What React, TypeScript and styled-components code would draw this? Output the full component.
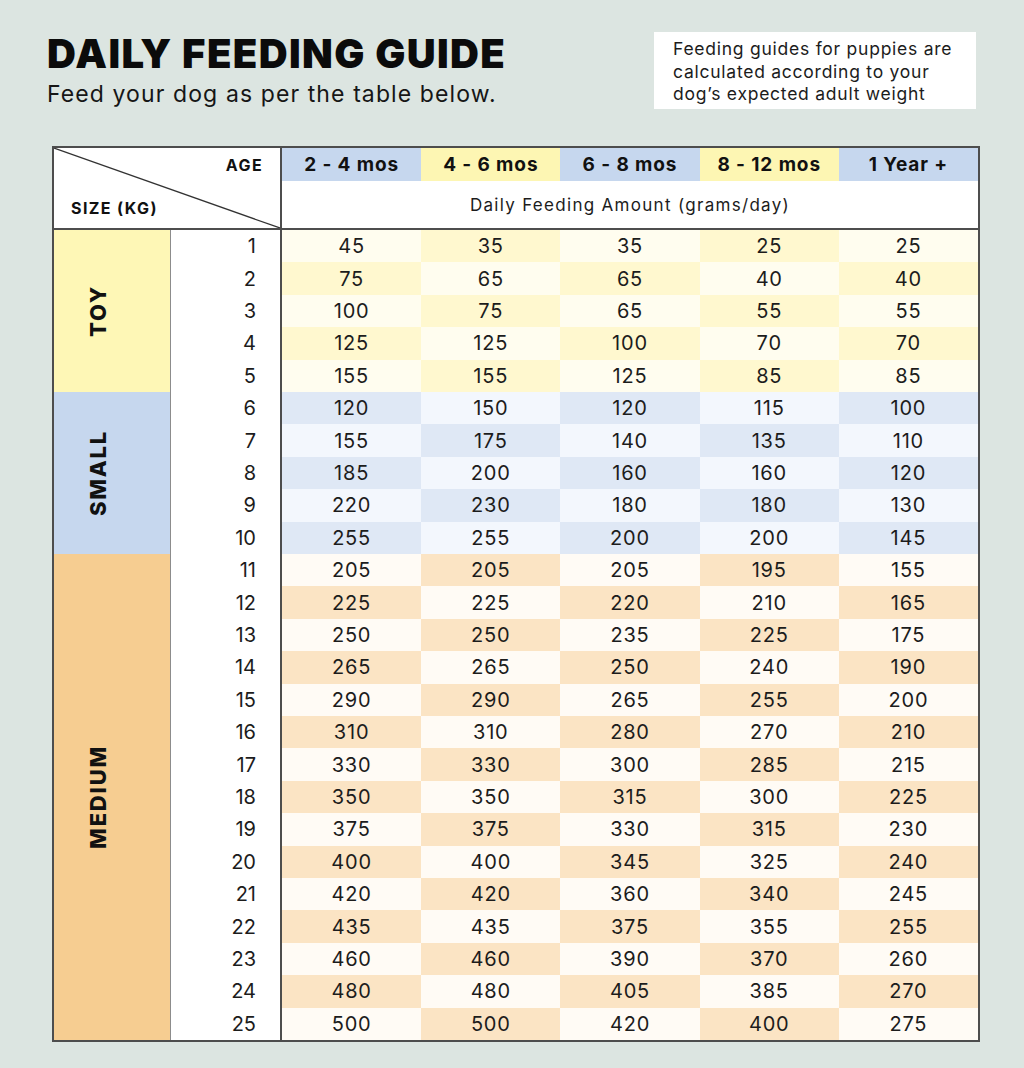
import React from "react";
import styled, { createGlobalStyle } from "styled-components";

const GlobalStyle = createGlobalStyle`
  html, body {
    margin: 0;
    padding: 0;
    background: #dce5e1;
  }
  body {
    font-family: Inter, "Liberation Sans", sans-serif;
    color: #1a1a1a;
  }
`;

type Tone = "toy" | "small" | "medium";

const palette: Record<Tone, { label: string; light: string; dark: string }> = {
  toy: { label: "#fef7b6", light: "#fffdef", dark: "#fff8cf" },
  small: { label: "#c6d7ee", light: "#f3f7fd", dark: "#dfe8f5" },
  medium: { label: "#f6cd91", light: "#fffbf5", dark: "#fbe4c4" },
};

const Page = styled.div`
  width: 1024px;
  height: 1068px;
  box-sizing: border-box;
  padding: 32px 48px 0 47px;
  background: #dce5e1;
`;

const Top = styled.div`
  display: flex;
  justify-content: space-between;
  align-items: flex-start;
`;

const Titles = styled.div`
  padding-top: 2px;
`;

const Title = styled.h1`
  margin: 0;
  font-size: 40px;
  line-height: 40px;
  font-weight: 900;
  color: #0b0b0b;
  letter-spacing: 1.4px;
`;

const Subtitle = styled.p`
  margin: 7px 0 0;
  font-size: 23px;
  line-height: 26px;
  font-weight: 400;
  color: #161616;
  letter-spacing: 1.1px;
`;

const Note = styled.div`
  width: 322px;
  height: 77px;
  box-sizing: border-box;
  padding: 6px 19px;
  background: #ffffff;
  font-size: 17.5px;
  line-height: 22.5px;
  color: #1c1c1c;
  letter-spacing: 0.75px;
`;

const Table = styled.div`
  margin: 37px 0 0 5px;
  width: 928px;
  height: 896px;
  box-sizing: border-box;
  border: 2px solid #4d4d4d;
  background: #ffffff;
  display: grid;
  grid-template-columns: 117px 111px repeat(5, 1fr);
  grid-template-rows: 33px 49px repeat(25, 1fr);
`;

const Corner = styled.div`
  grid-row: 1 / span 2;
  grid-column: 1 / span 2;
  position: relative;
  display: grid;
  grid-template-rows: 33px 1fr;
  padding: 0 17px;
  border-right: 2px solid #4d4d4d;
  border-bottom: 2px solid #4d4d4d;
  font-size: 16px;
  font-weight: 700;
  letter-spacing: 1.4px;
  color: #111;
`;

const Diagonal = styled.svg`
  position: absolute;
  inset: 0;
  width: 100%;
  height: 100%;
`;

const AgeLabel = styled.span`
  align-self: center;
  justify-self: end;
  padding-top: 1px;
`;

const SizeLabel = styled.span`
  align-self: center;
  justify-self: start;
  padding-top: 6px;
`;

const AgeHead = styled.div<{ $bg: string }>`
  background: ${(p) => p.$bg};
  display: flex;
  align-items: center;
  justify-content: center;
  font-size: 19px;
  font-weight: 700;
  color: #111;
  letter-spacing: 0.9px;
`;

const Amount = styled.div`
  grid-column: 3 / span 5;
  border-bottom: 2px solid #4d4d4d;
  display: flex;
  align-items: center;
  justify-content: center;
  font-size: 17px;
  letter-spacing: 1.3px;
  color: #1c1c1c;
`;

const GroupLabel = styled.div<{ $tone: Tone; $span: number }>`
  grid-column: 1;
  grid-row: span ${(p) => p.$span};
  background: ${(p) => palette[p.$tone].label};
  border-right: 1.5px solid #8c8c8c;
  display: flex;
  align-items: center;
  justify-content: center;
  padding-right: 28px;
`;

const GroupText = styled.span`
  writing-mode: vertical-rl;
  transform: rotate(180deg);
  font-size: 22px;
  font-weight: 800;
  letter-spacing: 1.8px;
  color: #111;
`;

const Kg = styled.div`
  grid-column: 2;
  border-right: 2px solid #4d4d4d;
  display: flex;
  align-items: center;
  justify-content: flex-end;
  padding-right: 24px;
  font-size: 20px;
  color: #1c1c1c;
`;

const Cell = styled.div<{ $bg: string }>`
  background: ${(p) => p.$bg};
  display: flex;
  align-items: center;
  justify-content: center;
  font-size: 20px;
  color: #1c1c1c;
  letter-spacing: 0.8px;
`;

const ages = [
  { label: "2 - 4 mos", bg: "#c6d7ee" },
  { label: "4 - 6 mos", bg: "#fdf6b3" },
  { label: "6 - 8 mos", bg: "#c6d7ee" },
  { label: "8 - 12 mos", bg: "#fdf6b3" },
  { label: "1 Year +", bg: "#c6d7ee" },
];

const rows: number[][] = [
  [45, 35, 35, 25, 25],
  [75, 65, 65, 40, 40],
  [100, 75, 65, 55, 55],
  [125, 125, 100, 70, 70],
  [155, 155, 125, 85, 85],
  [120, 150, 120, 115, 100],
  [155, 175, 140, 135, 110],
  [185, 200, 160, 160, 120],
  [220, 230, 180, 180, 130],
  [255, 255, 200, 200, 145],
  [205, 205, 205, 195, 155],
  [225, 225, 220, 210, 165],
  [250, 250, 235, 225, 175],
  [265, 265, 250, 240, 190],
  [290, 290, 265, 255, 200],
  [310, 310, 280, 270, 210],
  [330, 330, 300, 285, 215],
  [350, 350, 315, 300, 225],
  [375, 375, 330, 315, 230],
  [400, 400, 345, 325, 240],
  [420, 420, 360, 340, 245],
  [435, 435, 375, 355, 255],
  [460, 460, 390, 370, 260],
  [480, 480, 405, 385, 270],
  [500, 500, 420, 400, 275],
];

const groups: { name: string; tone: Tone; from: number; count: number }[] = [
  { name: "TOY", tone: "toy", from: 1, count: 5 },
  { name: "SMALL", tone: "small", from: 6, count: 5 },
  { name: "MEDIUM", tone: "medium", from: 11, count: 15 },
];

function toneFor(kg: number): Tone {
  if (kg <= 5) return "toy";
  if (kg <= 10) return "small";
  return "medium";
}

export default function App() {
  return (
    <Page>
      <GlobalStyle />
      <Top>
        <Titles>
          <Title>DAILY FEEDING GUIDE</Title>
          <Subtitle>Feed your dog as per the table below.</Subtitle>
        </Titles>
        <Note>
          Feeding guides for puppies are calculated according to your dog’s expected adult weight
        </Note>
      </Top>

      <Table>
        <Corner>
          <Diagonal viewBox="0 0 100 100" preserveAspectRatio="none">
            <line x1="0" y1="0" x2="100" y2="100" stroke="#333" strokeWidth="1.2" vectorEffect="non-scaling-stroke" />
          </Diagonal>
          <AgeLabel>AGE</AgeLabel>
          <SizeLabel>SIZE (KG)</SizeLabel>
        </Corner>
        {ages.map((a) => (
          <AgeHead key={a.label} $bg={a.bg}>
            {a.label}
          </AgeHead>
        ))}
        <Amount>Daily Feeding Amount (grams/day)</Amount>

        {rows.map((vals, i) => {
          const kg = i + 1;
          const group = groups.find((g) => g.from === kg);
          const tone = palette[toneFor(kg)];
          return (
            <React.Fragment key={kg}>
              {group && (
                <GroupLabel $tone={group.tone} $span={group.count}>
                  <GroupText>{group.name}</GroupText>
                </GroupLabel>
              )}
              <Kg>{kg}</Kg>
              {vals.map((v, c) => (
                <Cell key={c} $bg={(kg + c + 1) % 2 === 1 ? tone.dark : tone.light}>
                  {v}
                </Cell>
              ))}
            </React.Fragment>
          );
        })}
      </Table>
    </Page>
  );
}
